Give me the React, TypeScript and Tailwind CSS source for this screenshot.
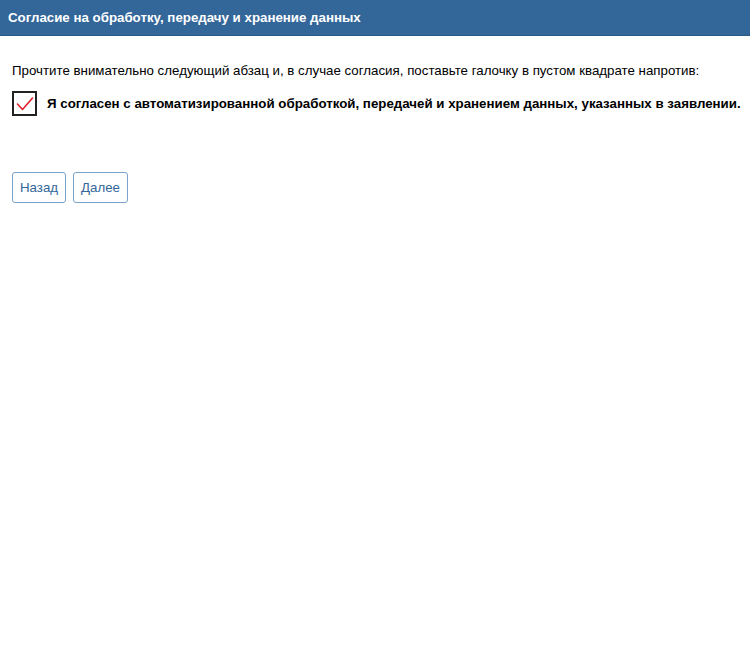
export default function App() {
  return (
    <div className="min-h-[666px] overflow-hidden bg-white font-['Liberation_Sans',Arial,sans-serif] text-black">
      {/* Header */}
      <div className="flex h-[36px] items-center border-b border-[#2b5a8a] bg-[#336699] px-[8px]">
        <h1 className="text-[13.3px] font-bold text-white">
          Согласие на обработку, передачу и хранение данных
        </h1>
      </div>

      <div className="px-[12px] pt-[27px]">
        <p className="whitespace-nowrap text-[13.3px] leading-[16px]">
          Прочтите внимательно следующий абзац и, в случае согласия, поставьте галочку в пустом квадрате напротив:
        </p>

        <label className="mt-[12px] flex items-center gap-[10px]">
          <span className="flex size-[25px] shrink-0 items-center justify-center border-2 border-[#222]">
            <svg viewBox="0 0 20 20" className="size-[20px]" fill="none">
              <path d="M2.5 10 L7.5 15.5 L17.5 4" stroke="#e0202a" strokeWidth="1.6" strokeLinecap="round" strokeLinejoin="round" />
            </svg>
          </span>
          <span className="whitespace-nowrap text-[13.3px] font-bold">
            Я согласен с автоматизированной обработкой, передачей и хранением данных, указанных в заявлении.
          </span>
        </label>

        <div className="mt-[56px] flex gap-[7px]">
          <button className="h-[31px] w-[54px] rounded-[3px] border border-[#7aa3cc] bg-white text-[13.3px] text-[#336699]">
            Назад
          </button>
          <button className="h-[31px] w-[55px] rounded-[3px] border border-[#7aa3cc] bg-white text-[13.3px] text-[#336699]">
            Далее
          </button>
        </div>
      </div>
    </div>
  );
}
